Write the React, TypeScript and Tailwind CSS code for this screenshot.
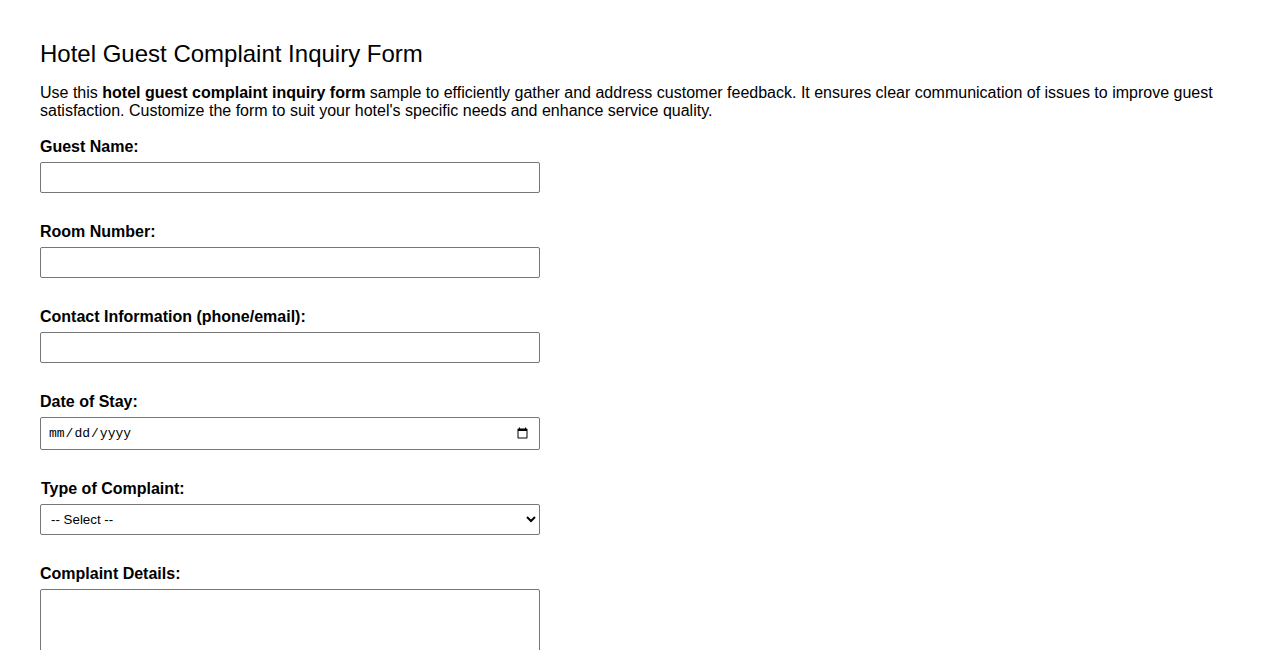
import React from "react";

const fields = [
  { id: "guestName", label: "Guest Name:" },
  { id: "roomNumber", label: "Room Number:" },
  { id: "contact", label: "Contact Information (phone/email):" },
];

const labelClass = "block text-[16px] leading-[18px] font-bold mb-[6px]";
const boxClass =
  "block w-[500px] border border-[#767676] rounded-[2px] bg-white mb-[30px]";

export default function App() {
  return (
    <div className="min-h-screen bg-white text-black font-['Liberation_Sans',Arial,sans-serif] pt-[40px] px-[40px]">
      <h2 className="text-[24px] leading-[28px] font-normal mb-[16px]">
        Hotel Guest Complaint Inquiry Form
      </h2>
      <p className="text-[16px] leading-[18px] mb-[18px]">
        Use this <strong>hotel guest complaint inquiry form</strong> sample to
        efficiently gather and address customer feedback. It ensures clear
        communication of issues to improve guest satisfaction. Customize the
        form to suit your hotel's specific needs and enhance service quality.
      </p>

      <form>
        {fields.map((f) => (
          <div key={f.id}>
            <label htmlFor={f.id} className={labelClass}>
              {f.label}
            </label>
            <input id={f.id} type="text" className={`${boxClass} h-[31px] px-2`} />
          </div>
        ))}

        {/* Date */}
        <label htmlFor="stayDate" className={labelClass}>
          Date of Stay:
        </label>
        <input
          id="stayDate"
          type="date"
          className={`${boxClass} h-[33px] pl-[7px] pr-[8px] font-['Liberation_Mono',monospace] text-[13px]`}
        />

        {/* Select */}
        <label htmlFor="type" className={`${labelClass} pl-px`}>
          Type of Complaint:
        </label>
        <select
          id="type"
          defaultValue=""
          className={`${boxClass} h-[31px] pl-[6px] text-[13.33px]`}
        >
          <option value="">-- Select --</option>
          <option>Room Cleanliness</option>
          <option>Staff Behavior</option>
          <option>Noise</option>
          <option>Amenities</option>
          <option>Billing</option>
          <option>Other</option>
        </select>

        <label htmlFor="details" className={labelClass}>
          Complaint Details:
        </label>
        <textarea
          id="details"
          className={`${boxClass} h-[100px] p-2 text-[13px] resize-y`}
        />
      </form>
    </div>
  );
}
